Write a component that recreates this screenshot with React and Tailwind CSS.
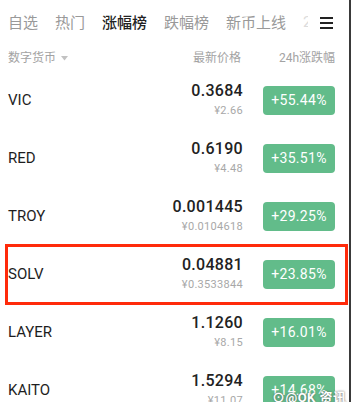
import React from 'react';

const tabs = [
  { label: '自选' },
  { label: '热门' },
  { label: '涨幅榜', active: true },
  { label: '跌幅榜' },
  { label: '新币上线' },
];

const coins = [
  { symbol: 'VIC', price: '0.3684', cny: '¥2.66', change: '+55.44%' },
  { symbol: 'RED', price: '0.6190', cny: '¥4.48', change: '+35.51%' },
  { symbol: 'TROY', price: '0.001445', cny: '¥0.0104618', change: '+29.25%' },
  { symbol: 'SOLV', price: '0.04881', cny: '¥0.3533844', change: '+23.85%' },
  { symbol: 'LAYER', price: '1.1260', cny: '¥8.15', change: '+16.01%' },
  { symbol: 'KAITO', price: '1.5294', cny: '¥11.07', change: '+14.68%' },
];

const cjk = { fontFamily: 'Roboto, "Noto Sans CJK SC", sans-serif' };

export default function App() {
  return (
    <div className="relative w-[352px] h-[402px] overflow-hidden bg-white" style={cjk}>
      {/* Tabs */}
      <div className="flex items-center h-[46px] pl-[8px] pr-[19px]">
        <div className="flex gap-[17px] flex-1 overflow-hidden">
          {tabs.map((t) => (
            <div key={t.label} className="relative shrink-0">
              <span
                className={`text-[15px] leading-[22px] ${
                  t.active ? 'text-[#222] font-medium' : 'text-[#999]'
                }`}
              >
                {t.label}
              </span>
              {t.active && (
                <div className="absolute left-1/2 -translate-x-1/2 top-[29px] w-[15px] h-[3px] rounded-full bg-[#f2d35a]" />
              )}
            </div>
          ))}
          <span className="text-[15px] leading-[22px] text-[#dcdcdc] shrink-0">2</span>
        </div>
        <div className="flex flex-col gap-[2.5px] w-[13px] ml-[12px]">
          <div className="h-[2.5px] bg-[#222]" />
          <div className="h-[2.5px] bg-[#222]" />
          <div className="h-[2.5px] bg-[#222]" />
        </div>
      </div>

      {/* Column header */}
      <div className="flex items-center h-[24px] pl-[8px] pr-[17px] text-[12px] text-[#a3a3a3]">
        <div className="flex-1 flex items-center gap-[5px]">
          <span>数字货币</span>
          <svg width="7" height="5" viewBox="0 0 7 5">
            <path d="M0 0h7L3.5 4.5z" fill="#c2c2c2" />
          </svg>
        </div>
        <span className="w-[60px] text-right mr-[22px]">最新价格</span>
        <span className="w-[72px] text-right">24h涨跌幅</span>
      </div>

      {/* Rows */}
      <div className="pt-[1px]">
        {coins.map((c) => (
          <div key={c.symbol} className="flex items-center h-[58px] pl-[8px] pr-[17px]">
            <span className="flex-1 text-[15px] text-[#1e1e1e]">{c.symbol}</span>
            <div className="flex flex-col items-end mr-[20px]">
              <span className="text-[16px] leading-[20px] font-medium text-[#222] tracking-[0.3px]">
                {c.price}
              </span>
              <span className="text-[11px] leading-[16px] mt-[2px] text-[#a8a8a8] tracking-[0.3px]">
                {c.cny}
              </span>
            </div>
            <div className="w-[72px] h-[29px] rounded-[4px] bg-[#62bc8a] flex items-center justify-center text-white text-[14px] tracking-[0.3px]">
              {c.change}
            </div>
          </div>
        ))}
      </div>

      {/* Red highlight box */}
      <div className="absolute left-[5px] top-[244px] w-[343px] h-[61px] border-[3.5px] border-[#ff2a0a] pointer-events-none" />

      {/* Right frame edge */}
      <div className="absolute right-[1px] top-0 w-[2px] h-full bg-[#3a3a3a]" />

      {/* Watermark */}
      <div className="absolute left-[272px] top-[388px] text-[13px] text-white font-bold tracking-[0.5px] [text-shadow:0_0_2px_#555]">
        ⊙@OK 资讯
      </div>
    </div>
  );
}
